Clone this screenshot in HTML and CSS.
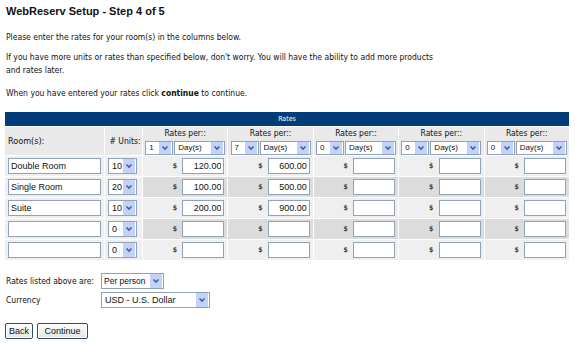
FILE: index.html
```html
<!DOCTYPE html>
<html lang="en">
<head>
    <meta charset="UTF-8">
    <title>WebReserv Setup - Step 4 of 5</title>
    <link rel="stylesheet" href="styles.css">
</head>
<body>
    <h2>WebReserv Setup - Step 4 of 5</h2>
    <p class="first">Please enter the rates for your room(s) in the columns below.</p>
    <p class="wide">If you have more units or rates than specified below, don't worry. You will have the ability to add more products and rates later.</p>
    <p class="last">When you have entered your rates click <b>continue</b> to continue.</p>

    <table class="rates">
        <colgroup>
            <col class="c-room">
            <col class="c-units">
            <col class="c-rate">
            <col class="c-rate">
            <col class="c-rate">
            <col class="c-rate">
            <col class="c-rate">
        </colgroup>
        <tr class="band"><th colspan="7">Rates</th></tr>
        <tr class="head">
            <td class="room-lbl">Room(s):</td>
            <td class="units-lbl"># Units:</td>
            <td class="per"><div>Rates per::</div><select class="num"><option>1</option></select><select class="unit"><option>Day(s)</option></select></td>
            <td class="per"><div>Rates per::</div><select class="num"><option>7</option></select><select class="unit"><option>Day(s)</option></select></td>
            <td class="per"><div>Rates per::</div><select class="num"><option>0</option></select><select class="unit"><option>Day(s)</option></select></td>
            <td class="per"><div>Rates per::</div><select class="num"><option>0</option></select><select class="unit"><option>Day(s)</option></select></td>
            <td class="per"><div>Rates per::</div><select class="num"><option>0</option></select><select class="unit"><option>Day(s)</option></select></td>
        </tr>
        <tr class="light">
            <td><input class="room" value="Double Room"></td>
            <td><select class="units"><option>10</option></select></td>
            <td class="rate">$ <input value="120.00"></td>
            <td class="rate">$ <input value="600.00"></td>
            <td class="rate">$ <input></td>
            <td class="rate">$ <input></td>
            <td class="rate">$ <input></td>
        </tr>
        <tr class="dark">
            <td><input class="room" value="Single Room"></td>
            <td><select class="units"><option>20</option></select></td>
            <td class="rate">$ <input value="100.00"></td>
            <td class="rate">$ <input value="500.00"></td>
            <td class="rate">$ <input></td>
            <td class="rate">$ <input></td>
            <td class="rate">$ <input></td>
        </tr>
        <tr class="light">
            <td><input class="room" value="Suite"></td>
            <td><select class="units"><option>10</option></select></td>
            <td class="rate">$ <input value="200.00"></td>
            <td class="rate">$ <input value="900.00"></td>
            <td class="rate">$ <input></td>
            <td class="rate">$ <input></td>
            <td class="rate">$ <input></td>
        </tr>
        <tr class="dark">
            <td><input class="room"></td>
            <td><select class="units"><option>0</option></select></td>
            <td class="rate">$ <input></td>
            <td class="rate">$ <input></td>
            <td class="rate">$ <input></td>
            <td class="rate">$ <input></td>
            <td class="rate">$ <input></td>
        </tr>
        <tr class="light">
            <td><input class="room"></td>
            <td><select class="units"><option>0</option></select></td>
            <td class="rate">$ <input></td>
            <td class="rate">$ <input></td>
            <td class="rate">$ <input></td>
            <td class="rate">$ <input></td>
            <td class="rate">$ <input></td>
        </tr>
    </table>

    <div class="opts">
        <label>Rates listed above are:</label>
        <select class="basis"><option>Per person</option></select>
        <label>Currency</label>
        <select class="currency"><option>USD - U.S. Dollar</option></select>
    </div>

    <div class="buttons">
        <button>Back</button>
        <button>Continue</button>
    </div>
</body>
</html>
```

FILE: styles.css
```css
body {
    font-family: "DejaVu Sans Condensed", "DejaVu Sans", sans-serif;
    font-stretch: condensed;
    font-size: 8.5px;
    color: #111;
    background-color: #fff;
    margin: 0;
    padding: 4px 4px;
}

h2 {
    font-family: "Liberation Sans", Arial, sans-serif;
    font-size: 11px;
    margin: 0 0 0 2px;
    line-height: 14px;
}

p {
    margin: 7px 0 0 2px;
    line-height: 13px;
}

p.first {
    margin-top: 13px;
}

p.wide {
    width: 440px;
}

p.last {
    margin-top: 10px;
}

/* rates grid */
.rates {
    width: 566px;
    margin-top: 11px;
    border-collapse: separate;
    border-spacing: 1px;
    table-layout: fixed;
}

.c-room {
    width: 99px;
}

.c-units {
    width: 37px;
}

.rates td {
    padding: 0;
    height: 20px;
    white-space: nowrap;
}

.band th {
    background-color: #003d79;
    color: #fff;
    font-weight: normal;
    height: 12px;
    line-height: 12px;
    font-size: 7px;
}

.head td {
    background-color: #e9e9e9;
    height: 27px;
    line-height: 14px;
}

.rates td.room-lbl {
    padding-left: 4px;
    font-size: 9px;
}

.rates td.units-lbl {
    text-align: center;
    padding-left: 0;
}

.per {
    text-align: center;
    vertical-align: top;
}

.per div {
    line-height: 11px;
    margin: 1px 0 1px;
}

.light td {
    background-color: #efefef;
}

.dark td {
    background-color: #efefef;
}

.dark td.rate {
    background-color: #dcdcdc;
}

.rates td:first-child {
    padding-left: 3px;
}

.rates td:nth-child(2) {
    padding-left: 3px;
}

.rates td.rate {
    text-align: right;
    padding-right: 3px;
    font-weight: bold;
    font-size: 7px;
    color: #444;
}

input {
    font-family: "Liberation Sans", Arial, sans-serif;
    font-size: 9px;
    color: #111;
    border: 1px solid #8fa2b8;
    height: 16px;
    box-sizing: border-box;
    padding: 0 2px;
    margin: 0;
    vertical-align: middle;
    background: #fff;
}

input.room {
    width: 93px;
}

.rate input {
    width: 42px;
    margin-left: 3px;
    text-align: right;
}

select {
    appearance: none;
    -webkit-appearance: none;
    font-family: "Liberation Sans", Arial, sans-serif;
    font-size: 9px;
    border: 1px solid #8fa2b8;
    height: 16px;
    box-sizing: border-box;
    padding: 0 14px 0 3px;
    margin: 0;
    vertical-align: middle;
    background: #fff url("data:image/svg+xml,%3Csvg xmlns='http://www.w3.org/2000/svg' width='12' height='14'%3E%3Crect x='0' y='0' width='12' height='14' fill='%23c1d3fb'/%3E%3Cpath d='M3.5 5.5 L6 8 L8.5 5.5' fill='none' stroke='%234d6185' stroke-width='1.6'/%3E%3C/svg%3E") no-repeat right 1px center;
    color: #111;
}

select.units {
    width: 29px;
}

.per select {
    height: 14px;
    font-size: 8px;
}

.per select.num {
    width: 28px;
}

.per select.unit {
    width: 51px;
    margin-left: 1px;
}

/* options under the table */
.opts {
    display: grid;
    grid-template-columns: 95px auto;
    row-gap: 3px;
    align-items: center;
    justify-items: start;
    margin: 12px 0 0 2px;
}

select.basis {
    width: 63px;
    font-size: 8.5px;
    padding: 0 13px 0 2px;
}

select.currency {
    width: 109px;
}

.buttons {
    margin-top: 15px;
    display: flex;
    gap: 4px;
    padding-left: 1px;
}

button {
    font-family: "Liberation Sans", Arial, sans-serif;
    font-size: 9px;
    color: #111;
    height: 16px;
    padding: 0 3px;
    border: 1px solid #2f4a6b;
    border-radius: 2px;
    background: linear-gradient(#fdfdfd, #e6e6e0);
    box-shadow: inset 0 0 0 1px #fff;
}

button + button {
    width: 51px;
}
```
